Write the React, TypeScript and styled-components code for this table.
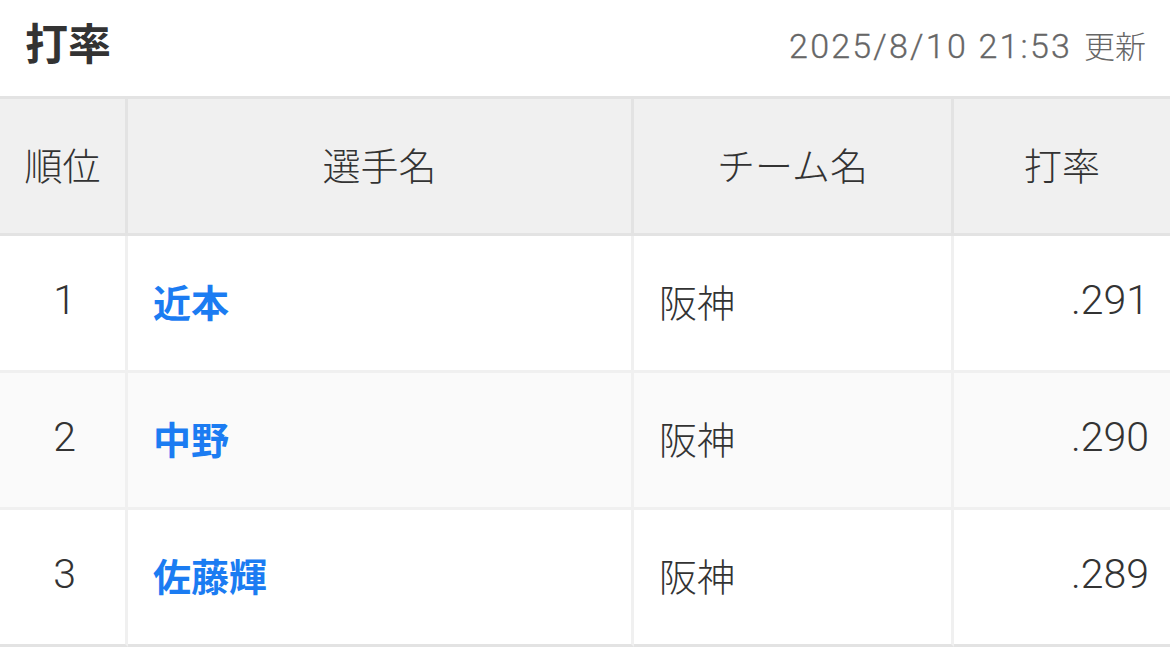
import React from 'react';
import styled, {createGlobalStyle} from 'styled-components';

const GlobalStyle = createGlobalStyle`
  html, body {
    margin: 0;
    padding: 0;
    background: #fff;
  }
  body {
    font-family: Roboto, "Noto Sans CJK JP", sans-serif;
    color: #333;
  }
`;

const Page = styled.div`
  width: 1170px;
`;

const TitleBar = styled.div`
  height: 96px;
  display: flex;
  align-items: center;
  justify-content: space-between;
  padding: 0 24px 8px 25px;
  box-sizing: border-box;
`;

const Title = styled.h2`
  margin: -6px 0 0;
  font-family: "Noto Sans CJK JP", sans-serif;
  font-size: 43px;
  font-weight: 700;
  color: #333;
  line-height: 1;
`;

const Updated = styled.div`
  display: flex;
  align-items: baseline;
  gap: 12px;
  color: #666;
`;

const Stamp = styled.span`
  font-size: 34px;
  font-weight: 300;
  letter-spacing: 2.2px;
  -webkit-text-stroke: 0.3px #666;
`;

const StampLabel = styled.span`
  font-family: "Noto Sans CJK JP", sans-serif;
  font-size: 31px;
  font-weight: 300;
`;

const Table = styled.table`
  width: 100%;
  table-layout: fixed;
  border-collapse: separate;
  border-spacing: 0;
  border-top: 3px solid #e3e3e3;
`;

const Th = styled.th<{ $last?: boolean }>`
  background: #f0f0f0;
  height: 128px;
  padding: 0 0 6px;
  font-size: 38px;
  font-weight: 300;
  color: #333;
  text-align: center;
  border-bottom: 3px solid #e3e3e3;
  border-right: ${p => p.$last ? 'none' : '3px solid #e3e3e3'};
`;

const Td = styled.td<{ $align?: 'left' | 'center' | 'right'; $last?: boolean; $numeric?: boolean; $bottom: string }>`
  height: 128px;
  padding: 0 21px 6px 25px;
  font-size: ${p => p.$numeric ? '41px' : '38px'};
  font-weight: 300;
  color: #333;
  text-align: ${p => p.$align || 'left'};
  border-bottom: 3px solid ${p => p.$bottom};
  border-right: ${p => p.$last ? 'none' : '3px solid #f0f0f0'};
`;

const Row = styled.tr<{ $striped: boolean }>`
  background: ${p => p.$striped ? '#fafafa' : '#fff'};
`;

const PlayerLink = styled.a`
  font-family: "Noto Sans CJK JP", sans-serif;
  color: #1b7cf2;
  font-weight: 700;
  text-decoration: none;
`;

const players = [
  {rank: 1, name: '近本', team: '阪神', avg: '.291'},
  {rank: 2, name: '中野', team: '阪神', avg: '.290'},
  {rank: 3, name: '佐藤輝', team: '阪神', avg: '.289'},
];

function App() {
  return (
    <Page>
      <GlobalStyle/>
      <TitleBar>
        <Title>打率</Title>
        <Updated>
          <Stamp>2025/8/10 21:53</Stamp>
          <StampLabel>更新</StampLabel>
        </Updated>
      </TitleBar>
      <Table>
        <colgroup>
          <col style={{width: 128}}/>
          <col style={{width: 506}}/>
          <col style={{width: 320}}/>
          <col/>
        </colgroup>
        <thead>
          <tr>
            <Th>順位</Th>
            <Th>選手名</Th>
            <Th>チーム名</Th>
            <Th $last>打率</Th>
          </tr>
        </thead>
        <tbody>
          {players.map((p, i) => {
            const bottom = i === players.length - 1 ? '#e3e3e3' : '#f0f0f0';
            return <Row key={p.rank} $striped={i % 2 === 1}>
              <Td $align="center" $numeric $bottom={bottom}>{p.rank}</Td>
              <Td $bottom={bottom}><PlayerLink href="#">{p.name}</PlayerLink></Td>
              <Td $bottom={bottom}>{p.team}</Td>
              <Td $align="right" $numeric $last $bottom={bottom}>{p.avg}</Td>
            </Row>;
          })}
        </tbody>
      </Table>
    </Page>
  );
}

export default App;
